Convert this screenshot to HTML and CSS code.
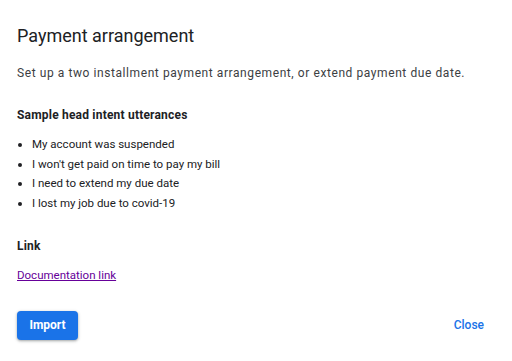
FILE: index.html
```html
<!DOCTYPE html>
<html lang="en">
<head>
    <meta charset="UTF-8">
    <meta name="viewport" content="width=device-width, initial-scale=1.0">
    <title>Payment arrangement</title>
    <link rel="stylesheet" href="styles.css">
</head>
<body>

    <div class="dialog">
        <h1 class="title">Payment arrangement</h1>
        <p class="desc">Set up a two installment payment arrangement, or extend payment due date.</p>

        <h2 class="heading">Sample head intent utterances</h2>
        <ul class="utterances">
            <li>My account was suspended</li>
            <li>I won't get paid on time to pay my bill</li>
            <li>I need to extend my due date</li>
            <li>I lost my job due to covid-19</li>
        </ul>

        <h2 class="heading">Link</h2>
        <a class="doc-link" href="#">Documentation link</a>

        <div class="actions">
            <button class="btn-import">Import</button>
            <button class="btn-close">Close</button>
        </div>
    </div>

</body>
</html>
```

FILE: styles.css
```css
body {
    margin: 0;
    padding: 0;
    background-color: #ffffff;
    font-family: Roboto, 'Noto Sans', Arial, sans-serif;
    color: #202124;
}

.dialog {
    width: 512px;
    height: 361px;
    box-sizing: border-box;
    padding: 24px 28px 0 17px;
    display: flex;
    flex-direction: column;
}

.title {
    margin: 0;
    font-size: 18px;
    font-weight: 400;
    line-height: 24px;
    color: #202124;
}

.desc {
    margin: 16px 0 0;
    font-size: 12px;
    letter-spacing: 0.58px;
    line-height: 18px;
    color: #3c4043;
}

.heading {
    margin: 24px 0 0;
    font-size: 12px;
    font-weight: 700;
    letter-spacing: 0.2px;
    line-height: 18px;
    color: #202124;
}

.utterances {
    margin: 11px 0 0;
    padding-left: 15px;
    font-size: 11.5px;
    line-height: 19.7px;
    color: #202124;
}

.utterances + .heading {
    margin-top: 23px;
}

.doc-link {
    margin-top: 11px;
    font-size: 11.5px;
    line-height: 18px;
    color: #660099;
    align-self: flex-start;
}

.actions {
    margin-top: 27px;
    display: flex;
    justify-content: space-between;
    align-items: center;
}

.btn-import {
    font-family: inherit;
    font-size: 12px;
    font-weight: 700;
    color: #ffffff;
    background-color: #1a73e8;
    border: none;
    border-radius: 4px;
    width: 61px;
    height: 29px;
    padding: 0;
    box-shadow: 0 1px 2px rgba(60, 64, 67, 0.3), 0 1px 3px 1px rgba(60, 64, 67, 0.15);
}

.btn-close {
    font-family: inherit;
    font-size: 12px;
    font-weight: 500;
    color: #1a73e8;
    background: none;
    border: none;
    padding: 0;
}
```
